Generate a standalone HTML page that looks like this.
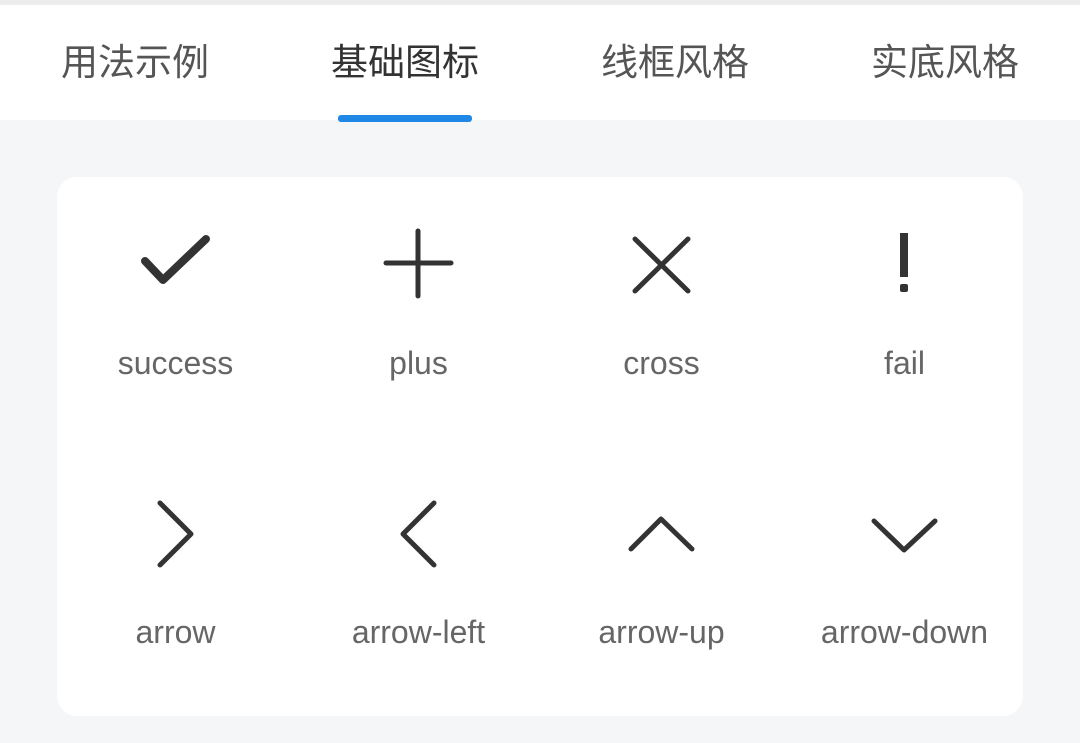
<!DOCTYPE html><html><head><meta charset="utf-8"><style>
body{margin:0;width:1080px;height:743px;background:#f5f6f8;font-family:"Liberation Sans","Noto Sans CJK SC",sans-serif;position:relative;overflow:hidden}
.top{position:absolute;left:0;top:0;width:1080px;height:5px;background:#ececec}
.bar{position:absolute;left:0;top:5px;width:1080px;height:115px;background:#fff}
.tab{position:absolute;top:39px;width:270px;text-align:center;font-size:37px;color:#555;line-height:48px}
.ul{position:absolute;left:338px;top:115px;width:134px;height:7px;border-radius:3px;background:#1f88e6}
.card{position:absolute;left:57px;top:177px;width:966px;height:539px;background:#fff;border-radius:20px}
.lb{position:absolute;width:243px;text-align:center;font-size:32px;color:#666;line-height:36px}
svg{position:absolute;left:0;top:0}
</style></head><body>
<div class="top"></div><div class="bar"></div>
<div class="tab" style="left:0">用法示例</div>
<div class="tab" style="left:270px;color:#333">基础图标</div>
<div class="tab" style="left:540px">线框风格</div>
<div class="tab" style="left:810px">实底风格</div>
<div class="ul"></div>
<div class="card"></div>
<svg width="1080" height="743" fill="none" stroke="#333" stroke-linecap="round" stroke-linejoin="round">
<path d="M145 261 L163 280 L206 239" stroke-width="8"/>
<path d="M418 231V296M386 263H451" stroke-width="5"/>
<path d="M635 239L688 291M688 239L635 291" stroke-width="5"/>
<path d="M904 233L904 277" stroke-width="8" stroke-linecap="butt"/>
<rect x="900" y="284" width="8" height="8" rx="2" fill="#333" stroke="none"/>
<path d="M160 503L191 534L160 565" stroke-width="5"/>
<path d="M434 503L403 534L434 565" stroke-width="5"/>
<path d="M631 549L661 519L692 549" stroke-width="5"/>
<path d="M874 521L904 550L935 521" stroke-width="5"/>
</svg>
<div class="lb" style="left:54px;top:345px">success</div>
<div class="lb" style="left:297px;top:345px">plus</div>
<div class="lb" style="left:540px;top:345px">cross</div>
<div class="lb" style="left:783px;top:345px">fail</div>
<div class="lb" style="left:54px;top:614px">arrow</div>
<div class="lb" style="left:297px;top:614px">arrow-left</div>
<div class="lb" style="left:540px;top:614px">arrow-up</div>
<div class="lb" style="left:783px;top:614px">arrow-down</div>
</body></html>
